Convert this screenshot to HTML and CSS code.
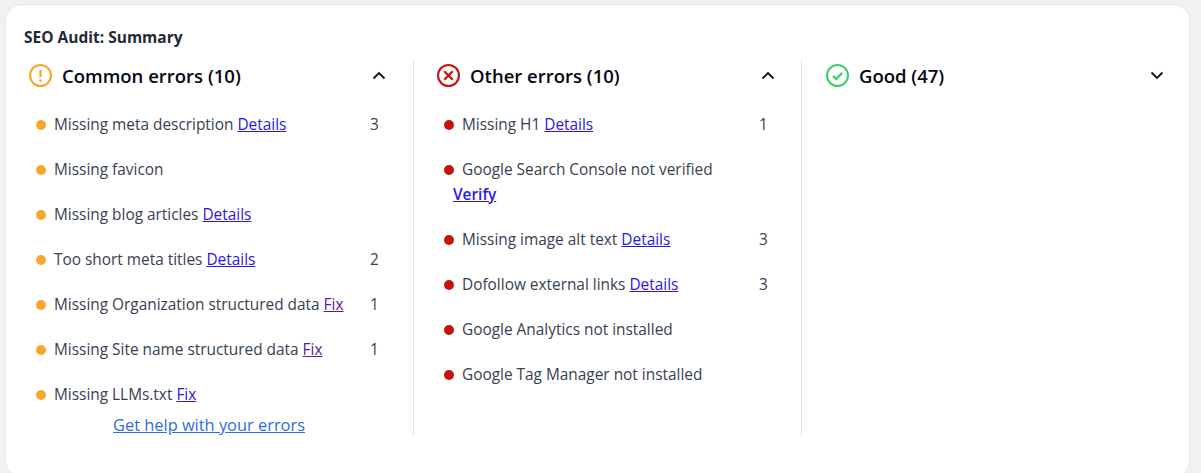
FILE: index.html
```html
<!DOCTYPE html>
<html lang="en">
<head>
<meta charset="utf-8">
<title>SEO Audit: Summary</title>
<link rel="stylesheet" href="styles.css">
</head>
<body>
<section class="card">
  <h2 class="title">SEO Audit: Summary</h2>
  <div class="columns">
    <div class="col">
      <div class="head">
        <svg class="status" viewBox="0 0 24 24" fill="none" stroke="#f9a72b" stroke-width="2.2"><circle cx="12" cy="12" r="10.9"/><path d="M12 6.3v7.4" stroke-width="2.4"/><circle cx="12" cy="17.3" r="1.4" fill="#f9a72b" stroke="none"/></svg>
        <span class="name">Common errors (10)</span>
        <svg class="chev" viewBox="0 0 14 9" fill="none" stroke="#111" stroke-width="1.8"><path d="M1.5 7.5 7 2l5.5 5.5"/></svg>
      </div>
      <ul class="list orange">
        <li><span class="dot"></span><span class="txt">Missing meta description <a href="#">Details</a></span><span class="n">3</span></li>
        <li><span class="dot"></span><span class="txt">Missing favicon</span></li>
        <li><span class="dot"></span><span class="txt">Missing blog articles <a href="#">Details</a></span></li>
        <li><span class="dot"></span><span class="txt">Too short meta titles <a href="#">Details</a></span><span class="n">2</span></li>
        <li><span class="dot"></span><span class="txt">Missing Organization structured data <a class="seen" href="#">Fix</a></span><span class="n">1</span></li>
        <li><span class="dot"></span><span class="txt">Missing Site name structured data <a class="seen" href="#">Fix</a></span><span class="n">1</span></li>
        <li><span class="dot"></span><span class="txt">Missing LLMs.txt <a href="#">Fix</a></span></li>
      </ul>
      <a class="help" href="#">Get help with your errors</a>
    </div>
    <div class="col">
      <div class="head">
        <svg class="status" viewBox="0 0 24 24" fill="none" stroke="#c5130c" stroke-width="2.2"><circle cx="12" cy="12" r="10.9"/><path d="M7.6 7.6l8.8 8.8M16.4 7.6l-8.8 8.8" stroke-width="2.4"/></svg>
        <span class="name">Other errors (10)</span>
        <svg class="chev" viewBox="0 0 14 9" fill="none" stroke="#111" stroke-width="1.8"><path d="M1.5 7.5 7 2l5.5 5.5"/></svg>
      </div>
      <ul class="list red">
        <li><span class="dot"></span><span class="txt">Missing H1 <a href="#">Details</a></span><span class="n">1</span></li>
        <li class="wrap"><span class="dot"></span><span class="txt">Google Search Console not verified</span><a class="verify" href="#">Verify</a></li>
        <li><span class="dot"></span><span class="txt">Missing image alt text <a href="#">Details</a></span><span class="n">3</span></li>
        <li><span class="dot"></span><span class="txt">Dofollow external links <a href="#">Details</a></span><span class="n">3</span></li>
        <li><span class="dot"></span><span class="txt">Google Analytics not installed</span></li>
        <li><span class="dot"></span><span class="txt">Google Tag Manager not installed</span></li>
      </ul>
    </div>
    <div class="col">
      <div class="head">
        <svg class="status" viewBox="0 0 24 24" fill="none" stroke="#3ecf6b" stroke-width="2.2"><circle cx="12" cy="12" r="10.9"/><path d="M7.3 12.4l3.3 3.3 6.2-6.4" stroke-width="2.4"/></svg>
        <span class="name">Good (47)</span>
        <svg class="chev" viewBox="0 0 14 9" fill="none" stroke="#111" stroke-width="1.8"><path d="M1.5 1.5 7 7l5.5-5.5"/></svg>
      </div>
    </div>
  </div>
</section>
</body>
</html>
```
FILE: styles.css
```css
* { box-sizing: border-box; }
html, body { height: 100%; }
body {
  margin: 0;
  padding: 4px 11px 0 5px;
  background: #f0f1f3;
  overflow: hidden;
  font-family: "Open Sans", "Noto Sans", "Liberation Sans", sans-serif;
  color: #374151;
}
.card {
  height: 473px;
  background: #fff;
  border: 1px solid #e5e7eb;
  border-radius: 16px;
  padding: 22px 18px 0 18px;
}
.title {
  margin: 0;
  font-size: 15.5px;
  line-height: 20px;
  font-weight: 700;
  color: #1f2937;
}
.columns {
  display: grid;
  grid-template-columns: 389px 388px 1fr;
  margin-top: 12px;
  height: 377px;
}
.col {
  display: flex;
  flex-direction: column;
  padding: 0 27px 0 5px;
}
.col + .col {
  border-left: 1px solid #e5e7eb;
  padding-left: 23px;
  padding-right: 26px;
}
.col:last-child { padding-left: 24px; padding-right: 7px; }
.head {
  display: flex;
  align-items: center;
  height: 32px;
}
.status { width: 23px; height: 23px; flex: none; }
.name {
  margin-left: 10px;
  flex: 1;
  font-size: 18.5px;
  font-weight: 600;
  color: #030712;
}
.chev { width: 14px; height: 9px; flex: none; }
.list {
  list-style: none;
  margin: 23px 0 0;
  padding: 0 0 0 7px;
  font-size: 15.4px;
  line-height: 21px;
}
.list li {
  display: flex;
  flex-wrap: wrap;
  align-items: center;
  min-height: 21px;
  margin-bottom: 24px;
}
.dot {
  width: 10px;
  height: 10px;
  border-radius: 50%;
  margin-right: 8px;
  flex: none;
}
.orange .dot { background: #f9a72b; }
.red .dot { background: #c5130c; }
.txt { flex: 1; white-space: nowrap; }
.n { width: 16px; color: #374151; }
.list a { color: #2a16e8; }
.list a.seen { color: #5b1a9a; }
.list a.verify { flex: 0 0 auto; font-weight: 600; margin: 4px 0 0 9px; }
.wrap .txt { flex: 0 0 calc(100% - 18px); }
.help {
  align-self: center;
  margin: -15px 0 0 3px;
  font-size: 16.4px;
  line-height: 22px;
  color: #2b6de0;
}
```
